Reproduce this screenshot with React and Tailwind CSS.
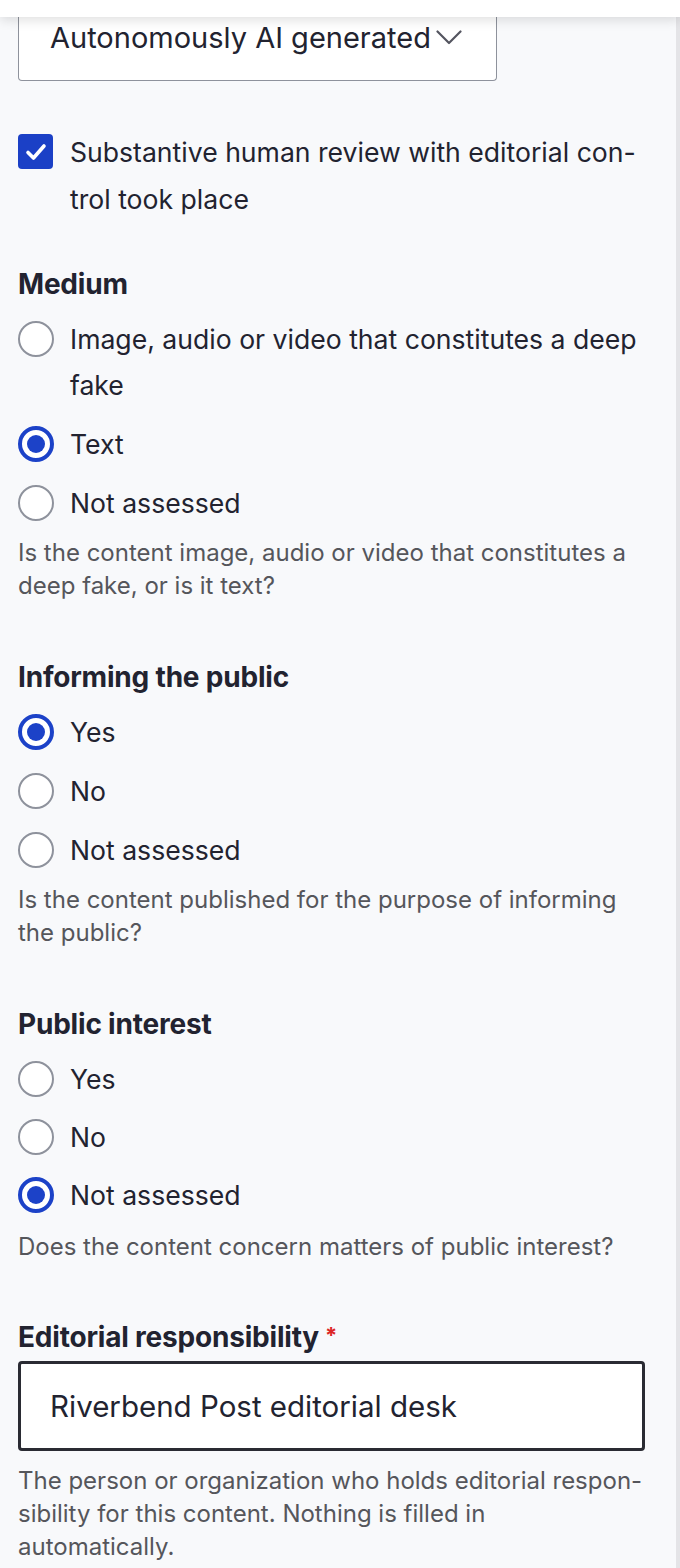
import React from "react";

const font = { fontFamily: "Inter, 'Noto Sans', 'Liberation Sans', sans-serif" };

function Radio({ checked }) {
  return checked ? (
    <span className="mt-[5px] flex h-[36px] w-[36px] shrink-0 items-center justify-center rounded-full border-[4px] border-[#1c42c8] bg-white">
      <span className="h-[18px] w-[18px] rounded-full bg-[#1c42c8]" />
    </span>
  ) : (
    <span className="mt-[5px] h-[36px] w-[36px] shrink-0 rounded-full border-2 border-[#8e929c] bg-white" />
  );
}

function RadioGroup({ title, options, value, help, tight }) {
  return (
    <div className="mt-[59px]">
      <h2 className="mb-[16px] whitespace-nowrap text-[28px] font-bold leading-[32px] tracking-[-0.2px] text-[#222330]">
        {title}
      </h2>
      <div className={tight ? "flex flex-col gap-[12px]" : "flex flex-col gap-[13px]"}>
        {options.map((opt) => (
          <label key={opt.key} className="flex items-start gap-[16px]">
            <Radio checked={opt.key === value} />
            <span className="text-[26.6px] leading-[46px] text-[#222330]">
              {opt.lines.map((l) => (
                <span key={l} className="block whitespace-nowrap">
                  {l}
                </span>
              ))}
            </span>
          </label>
        ))}
      </div>
      <p className={(tight ? "mt-[12px]" : "mt-[10px]") + " text-[24px] leading-[33px] text-[#55565b]"}>
        {help.map((l) => (
          <span key={l} className="block whitespace-nowrap">
            {l}
          </span>
        ))}
      </p>
    </div>
  );
}

export default function App() {
  const yesNo = [
    { key: "yes", lines: ["Yes"] },
    { key: "no", lines: ["No"] },
    { key: "na", lines: ["Not assessed"] },
  ];

  return (
    <div className="flex min-h-[1568px] w-[680px] flex-col overflow-hidden bg-[#f8f9fb]" style={font}>
      {/* sticky header strip */}
      <div className="relative z-10 h-[17px] shrink-0 bg-white shadow-[0_3px_12px_rgba(0,0,0,0.13)]" />

      <div className="flex-1 border-r-4 border-[#e4e4e7] pl-[18px] pr-[31px] pb-[10px]">
        {/* select, top cut off by header */}
        <div className="flex h-[64px] w-[479px] items-start rounded-b-[4px] border border-t-0 border-[#8e929c] bg-white pl-[31px] pt-[3px]">
          <span className="whitespace-nowrap text-[29px] leading-[36px] text-[#222330]">
            Autonomously AI generated
          </span>
          <svg className="ml-[5px] mt-[10px]" width="26" height="15" viewBox="0 0 26 15" fill="none">
            <path d="M1.5 1.5 13 13 24.5 1.5" stroke="#545560" strokeWidth="2.2" strokeLinecap="round" strokeLinejoin="round" />
          </svg>
        </div>

        {/* checkbox */}
        <label className="mt-[48px] flex items-start gap-[17px]">
          <span className="mt-[5px] flex h-[35px] w-[35px] shrink-0 items-center justify-center rounded-[4px] bg-[#1b40c6]">
            <svg width="22" height="18" viewBox="0 0 22 18" fill="none">
              <path d="M3 9.5 8.5 15 19 3" stroke="white" strokeWidth="3.6" strokeLinecap="round" strokeLinejoin="round" />
            </svg>
          </span>
          <span className="text-[26.6px] leading-[47px] text-[#222330]">
            <span className="block whitespace-nowrap">Substantive human review with editorial con-</span>
            <span className="block whitespace-nowrap">trol took place</span>
          </span>
        </label>

        <div className="mt-[-14px]">
          <RadioGroup
            title="Medium"
            value="text"
            options={[
              { key: "deep", lines: ["Image, audio or video that constitutes a deep", "fake"] },
              { key: "text", lines: ["Text"] },
              { key: "na", lines: ["Not assessed"] },
            ]}
            help={["Is the content image, audio or video that constitutes a", "deep fake, or is it text?"]}
          />
        </div>

        <RadioGroup
          title="Informing the public"
          value="yes"
          options={yesNo}
          help={["Is the content published for the purpose of informing", "the public?"]}
        />

        <RadioGroup
          title="Public interest"
          value="na"
          tight
          options={yesNo}
          help={["Does the content concern matters of public interest?"]}
        />

        {/* editorial responsibility */}
        <div className="mt-[58px]">
          <h2 className="flex items-start whitespace-nowrap text-[28px] font-bold leading-[32px] tracking-[-0.2px] text-[#222330]">
            Editorial responsibility
            <span className="ml-[6px] mt-[-2px] text-[22px] text-[#dc2626]">*</span>
          </h2>
          <div className="mt-[8px] flex h-[90px] w-[627px] items-center rounded-[4px] border-[3px] border-[#2a2b33] bg-white pl-[29px]">
            <span className="whitespace-nowrap text-[29.5px] text-[#222330]">Riverbend Post editorial desk</span>
          </div>
          <p className="mt-[13px] text-[24px] leading-[33px] text-[#55565b]">
            <span className="block whitespace-nowrap">The person or organization who holds editorial respon-</span>
            <span className="block whitespace-nowrap">sibility for this content. Nothing is filled in</span>
            <span className="block whitespace-nowrap">automatically.</span>
          </p>
        </div>
      </div>
    </div>
  );
}
